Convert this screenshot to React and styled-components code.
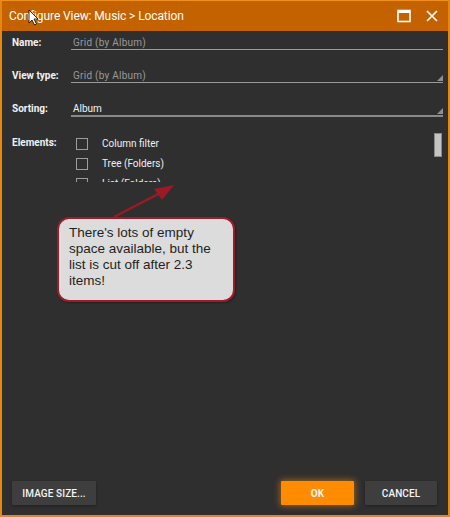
import React from "react";
import styled, { createGlobalStyle } from "styled-components";

const Global = createGlobalStyle`
  html, body { margin: 0; padding: 0; background: #2f2f2f; }
  body { font-family: Roboto, "Noto Sans", sans-serif; }
  * { box-sizing: border-box; }
`;

const Window = styled.div`
  position: relative;
  width: 450px;
  height: 517px;
  display: flex;
  flex-direction: column;
  background: #2f2f2f;
  border: 2px solid #e8870e;
  border-top: 1px solid #f0901a;
`;

const TitleBar = styled.div`
  height: 30px;
  flex: none;
  display: flex;
  align-items: center;
  background: #c46200;
  padding: 0 0 0 7px;
  color: #fff;
`;

const Title = styled.div`
  flex: 1;
  font-size: 12px;
  letter-spacing: -0.1px;
`;

const TitleButton = styled.div`
  width: 28px;
  height: 30px;
  display: flex;
  align-items: center;
  justify-content: center;
`;

const Body = styled.div`
  flex: 1;
  display: flex;
  flex-direction: column;
  padding: 0 5px 0 10px;
`;

const Row = styled.div`
  display: flex;
  align-items: flex-start;
  flex: none;
  height: ${(p) => p.h}px;
`;

const Label = styled.div`
  width: 59px;
  flex: none;
  font-size: 10px;
  font-weight: 700;
  color: #f2f2f2;
  padding-top: ${(p) => (p.pt != null ? p.pt : 6)}px;
`;

const Field = styled.div`
  position: relative;
  flex: 1;
  height: ${(p) => (p.thick ? 20 : 19)}px;
  font-size: 10px;
  padding: 6px 0 0 2px;
  letter-spacing: ${(p) => (p.dim ? "0.25px" : "0")};
  color: ${(p) => (p.dim ? "#9a9a9a" : "#f4f4f4")};
  border-bottom: ${(p) => (p.thick ? "2px solid #8a8a8a" : "1px solid #9a9a9a")};
`;

const Corner = styled.div`
  position: absolute;
  right: 0;
  bottom: 1px;
  width: 0;
  height: 0;
  border-left: 6px solid transparent;
  border-bottom: 6px solid #8f8f8f;
`;

const ListClip = styled.div`
  flex: 1;
  height: 49px;
  overflow: hidden;
  position: relative;
  padding-left: 5px;
`;

const Item = styled.div`
  display: flex;
  align-items: center;
  height: 20px;
  padding-top: 1px;
  font-size: 10px;
  color: #f0f0f0;
`;

const Box = styled.div`
  width: 12px;
  height: 12px;
  border: 1.5px solid #9c9c9c;
  margin-right: 14px;
  flex: none;
`;

const Scroll = styled.div`
  position: absolute;
  right: 1px;
  top: 0px;
  width: 8px;
  height: 24px;
  background: #c4c4c4;
  border: 1px solid #8a8a8a;
`;

const Spacer = styled.div`
  flex: 1;
`;

const Footer = styled.div`
  display: flex;
  align-items: center;
  padding: 0 11px 10px 10px;
  gap: 11px;
`;

const Button = styled.div`
  height: 24px;
  min-width: ${(p) => p.w}px;
  display: flex;
  align-items: center;
  justify-content: center;
  font-size: 10px;
  font-weight: ${(p) => (p.primary ? 700 : 500)};
  color: #f4f4f4;
  background: ${(p) => (p.primary ? "#ff8c00" : "#3e3e3e")};
  box-shadow: ${(p) =>
    p.primary ? "0 0 6px 1px rgba(255,140,0,0.55)" : "0 1px 3px rgba(0,0,0,0.35)"};
  border-radius: 1px;
  letter-spacing: 0.1px;
`;

const Callout = styled.div`
  position: absolute;
  left: 55px;
  top: 216px;
  width: 178px;
  height: 85px;
  background: #dcdcdc;
  border: 2px solid #a01a2c;
  border-radius: 12px;
  padding: 6px 8px 0 10px;
  font-family: "Liberation Sans", Arial, sans-serif;
  font-size: 13.5px;
  line-height: 16px;
  color: #1e1e1e;
  box-shadow: 1px 1px 2px rgba(0, 0, 0, 0.3);
`;

const Overlay = styled.svg`
  position: absolute;
  left: 0;
  top: 0;
  pointer-events: none;
`;

export default function App() {
  return (
    <>
      <Global />
      <Window>
        <TitleBar>
          <Title>Configure View: Music &gt; Location</Title>
          <TitleButton>
            <svg width="14" height="14" viewBox="0 0 14 14">
              <rect x="1" y="1.5" width="12" height="11" fill="none" stroke="#fff" strokeWidth="1.6" />
              <rect x="1" y="1.5" width="12" height="2.5" fill="#fff" />
            </svg>
          </TitleButton>
          <TitleButton style={{ marginRight: 2 }}>
            <svg width="14" height="14" viewBox="0 0 14 14">
              <path d="M2 2 L12 12 M12 2 L2 12" stroke="#fff" strokeWidth="1.6" />
            </svg>
          </TitleButton>
        </TitleBar>
        <Body>
          <Row h={33}>
            <Label>Name:</Label>
            <Field dim>Grid (by Album)</Field>
          </Row>
          <Row h={33}>
            <Label>View type:</Label>
            <Field dim>
              Grid (by Album)
              <Corner />
            </Field>
          </Row>
          <Row h={36}>
            <Label>Sorting:</Label>
            <Field thick>
              Album
              <Corner />
            </Field>
          </Row>
          <Row h={60}>
            <Label pt={4}>Elements:</Label>
            <ListClip>
              <Item>
                <Box />
                Column filter
              </Item>
              <Item>
                <Box />
                Tree (Folders)
              </Item>
              <Item>
                <Box />
                List (Folders)
              </Item>
              <Scroll />
            </ListClip>
          </Row>
          <Spacer />
        </Body>
        <Footer>
          <Button w={84}>IMAGE SIZE...</Button>
          <Spacer />
          <Button primary w={73}>OK</Button>
          <Button w={72}>CANCEL</Button>
        </Footer>
        <Callout>
          There's lots of empty space available, but the list is cut off after 2.3 items!
        </Callout>
        <Overlay width="450" height="517" viewBox="0 0 450 517">
          <line x1="112" y1="216" x2="162" y2="190" stroke="#9a1a25" strokeWidth="2.5" />
          <polygon points="172,184 152,188 160,199" fill="#9a1a25" />
          <path
            d="M27 9 L27 22 L30 19 L32.5 24 L34.5 23 L32 18 L36 18 Z"
            fill="#fff"
            stroke="#000"
            strokeWidth="0.8"
          />
        </Overlay>
      </Window>
    </>
  );
}
